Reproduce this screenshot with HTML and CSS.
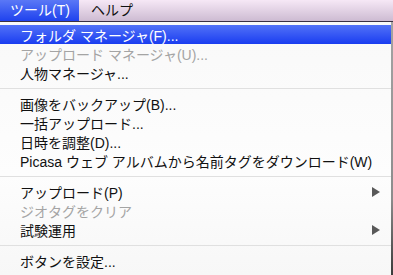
FILE: index.html
```html
<!DOCTYPE html>
<html lang="ja">
<head>
    <meta charset="UTF-8">
    <title>ツール メニュー</title>
    <link rel="stylesheet" href="styles.css">
</head>
<body>
    <header class="menubar">
        <span class="menubar-item active">ツール(T)</span>
        <span class="menubar-item">ヘルプ</span>
    </header>

    <div class="screen">
        <ul class="menu">
            <li class="menu-item selected">フォルダ マネージャ(F)...</li>
            <li class="menu-item disabled">アップロード マネージャ(U)...</li>
            <li class="menu-item">人物マネージャ...</li>
            <li class="separator"></li>
            <li class="menu-item">画像をバックアップ(B)...</li>
            <li class="menu-item">一括アップロード...</li>
            <li class="menu-item">日時を調整(D)...</li>
            <li class="menu-item">Picasa ウェブ アルバムから名前タグをダウンロード(W)</li>
            <li class="separator"></li>
            <li class="menu-item has-sub">アップロード(P)<span class="arrow"></span></li>
            <li class="menu-item disabled">ジオタグをクリア</li>
            <li class="menu-item has-sub">試験運用<span class="arrow"></span></li>
            <li class="separator"></li>
            <li class="menu-item">ボタンを設定...</li>
        </ul>
        <div class="edge"></div>
    </div>
</body>
</html>
```

FILE: styles.css
```css
body {
    margin: 0;
    width: 393px;
    height: 275px;
    overflow: hidden;
    font-family: 'Liberation Sans', 'Noto Sans CJK JP', sans-serif;
    font-size: 14px;
    color: #111;
    background-color: #fbfbfb;
}

.menubar {
    display: flex;
    height: 21px;
    background: linear-gradient(to bottom, #f6e8f6, #cdbbd2);
    border-bottom: 1px solid #3a3044;
}

.menubar-item {
    display: flex;
    align-items: center;
    padding: 0 12px 0 12px;
    line-height: 21px;
}

.menubar-item.active {
    color: #fff;
    background: linear-gradient(to bottom, #5a78f6, #1f42ee);
    padding: 0 9px 0 10px;
}

.screen {
    display: flex;
}

.menu {
    list-style: none;
    margin: 0;
    padding: 3px 0 0;
    width: 391px;
    height: 250px;
    background: linear-gradient(to bottom, #f9f9f9, #fdfdfd 60%, #f7f7f7);
}

.menu-item {
    display: flex;
    align-items: center;
    justify-content: space-between;
    box-sizing: border-box;
    height: 19px;
    padding: 1px 11px 0 20px;
    white-space: nowrap;
}

.menu-item.selected {
    color: #fff;
    background: linear-gradient(to bottom, #5272f8, #1a3df0);
}

.menu-item.disabled {
    color: #a4a4a4;
}

.separator {
    height: 12px;
    background: linear-gradient(#e0e0e0, #e0e0e0) no-repeat 0 6px / 100% 1px;
}

.arrow {
    width: 0;
    height: 0;
    border-top: 5px solid transparent;
    border-bottom: 5px solid transparent;
    border-left: 8px solid #595959;
}

.edge {
    width: 2px;
    background: linear-gradient(to bottom, #a4a4a4, #8c8c8c 70%, #3a3a3a);
}
```
